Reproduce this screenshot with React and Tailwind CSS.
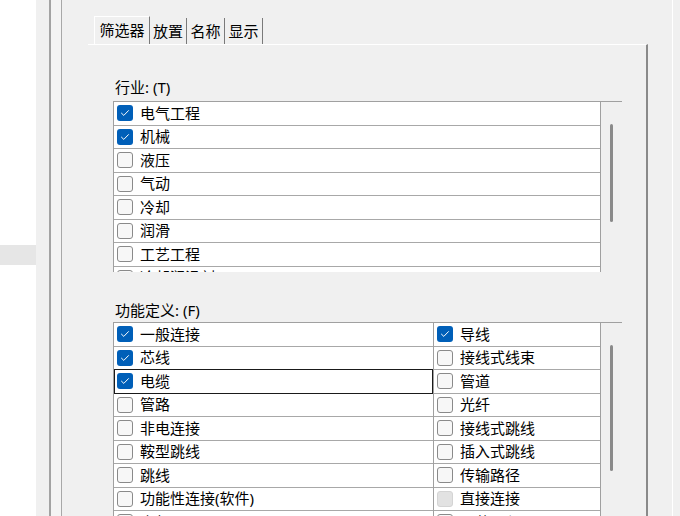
import React from "react";

const font = { fontFamily: '"Noto Sans", "Noto Sans CJK SC", sans-serif' };

function Check({ checked, disabled }) {
  if (checked) {
    return (
      <span className="flex h-4 w-4 shrink-0 items-center justify-center rounded-[3px] bg-[#005fb8]">
        <svg width="10" height="8" viewBox="0 0 10 8" fill="none">
          <path d="M1.5 4.2 L3.8 6.4 L8.5 1.6" stroke="white" strokeWidth="1" strokeLinecap="round" strokeLinejoin="round" />
        </svg>
      </span>
    );
  }
  if (disabled) {
    return <span className="h-4 w-4 shrink-0 rounded-[3px] border border-[#d4d4d4] bg-[#e2e2e2]" />;
  }
  return <span className="h-4 w-4 shrink-0 rounded-[3px] border border-[#8a8a8a] bg-[#f7f7f7]" />;
}

function Row({ label, checked, disabled, focused }) {
  return (
    <div className="relative flex h-[23.5px] shrink-0 items-center gap-[7px] border-b border-[#a8a8a8] bg-white pl-[3px] text-[15px] leading-none text-black">
      <Check checked={checked} disabled={disabled} />
      <span className="whitespace-nowrap">{label}</span>
      {focused && <span className="absolute inset-[-1px_0_-1px_0] border-[1.5px] border-[#1a1a1a]" />}
    </div>
  );
}

function Scroll({ top, height }) {
  return (
    <div className="flex w-[22px] shrink-0 flex-col items-center border-l border-[#a0a0a0] bg-[#f0f0f0]">
      <div className="w-[3px] shrink-0 rounded-full bg-[#8a8a8a]" style={{ marginTop: top, height }} />
    </div>
  );
}

const industries = [
  ["电气工程", true],
  ["机械", true],
  ["液压"],
  ["气动"],
  ["冷却"],
  ["润滑"],
  ["工艺工程"],
  ["冷却润滑剂"],
];

const leftFns = [
  ["一般连接", true],
  ["芯线", true],
  ["电缆", true, false, true],
  ["管路"],
  ["非电连接"],
  ["鞍型跳线"],
  ["跳线"],
  ["功能性连接(软件)"],
  ["内部"],
];

const rightFns = [
  ["导线", true],
  ["接线式线束"],
  ["管道"],
  ["光纤"],
  ["接线式跳线"],
  ["插入式跳线"],
  ["传输路径"],
  ["直接连接", false, true],
  ["工艺工程"],
];

export default function App() {
  return (
    <div className="flex h-[516px] w-[680px] overflow-hidden bg-[#f0f0f0]" style={font}>
      <div className="flex w-[36px] shrink-0 flex-col bg-white">
        <div className="mt-[245px] h-[20px] shrink-0 bg-[#e6e6e6]" />
      </div>
      <div className="w-[15px] shrink-0 border-r-2 border-[#a3a3a3] bg-[#f0f0f0]" />
      <div className="w-[11px] shrink-0 border-r border-[#a8a8a8] bg-[#f4f4f4]" />

      <div className="flex min-h-0 flex-1 flex-col overflow-hidden">
        <div className="flex h-[44px] shrink-0 items-end pl-[32px] text-[15px] text-black">
          <div className="flex h-[28px] w-[56px] items-center justify-center border-t border-l border-white border-r border-r-[#7a7a7a] bg-[#f0f0f0]">
            筛选器
          </div>
          <div className="flex h-[26px] w-[37px] items-center justify-center border-r border-[#7a7a7a]">放置</div>
          <div className="flex h-[26px] w-[38px] items-center justify-center border-r border-[#7a7a7a]">名称</div>
          <div className="flex h-[26px] w-[38px] items-center justify-center border-r border-[#7a7a7a]">显示</div>
        </div>

        <div className="ml-[26px] mr-[24px] flex min-h-0 flex-1 flex-col border-t border-white border-r-2 border-r-[#8a8a8a] pl-[25px] pr-[24px]">
          <div className="mt-[33px] ml-[2px] h-[23px] shrink-0 text-[15px] leading-[18px] text-black">行业: (T)</div>
          <div className="flex h-[171px] shrink-0 overflow-hidden border-t border-l border-[#a0a0a0]">
            <div className="flex flex-1 flex-col overflow-hidden">
              {industries.map(([l, c]) => (
                <Row key={l} label={l} checked={c} />
              ))}
            </div>
            <Scroll top={22} height={98} />
          </div>

          <div className="mt-[29px] ml-[2px] h-[21px] shrink-0 text-[15px] leading-[18px] text-black">功能定义: (F)</div>
          <div className="flex min-h-0 flex-1 overflow-hidden border-t border-l border-[#a0a0a0]">
            <div className="flex w-[320px] shrink-0 flex-col overflow-hidden border-r border-[#a0a0a0]">
              {leftFns.map(([l, c, d, f]) => (
                <Row key={l} label={l} checked={c} disabled={d} focused={f} />
              ))}
            </div>
            <div className="flex flex-1 flex-col overflow-hidden">
              {rightFns.map(([l, c, d]) => (
                <Row key={l} label={l} checked={c} disabled={d} />
              ))}
            </div>
            <Scroll top={22} height={126} />
          </div>
        </div>
      </div>

      <div className="w-[1px] shrink-0 bg-white" />
      <div className="w-[7px] shrink-0 bg-[#f0f0f0]" />
    </div>
  );
}
